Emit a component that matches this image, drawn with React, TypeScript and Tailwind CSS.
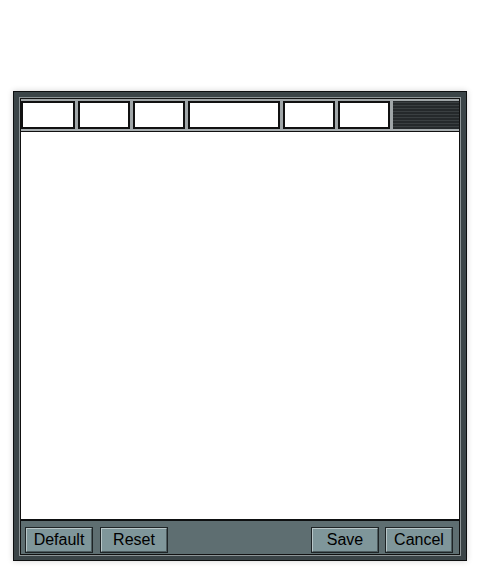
const tabs = [
  { w: 'w-[54px]' },
  { w: 'w-[52px]' },
  { w: 'w-[52px]' },
  { w: 'w-[92px]' },
  { w: 'w-[52px]' },
  { w: 'w-[52px]' },
];

function FrameButton({ label }: { label: string }) {
  return (
    <button className="h-[26px] w-[68px] border border-[#1e2426] bg-[#7f969a] p-0">
      <div className="flex h-full w-full items-center justify-center border border-t-[#b8c6c8] border-l-[#b8c6c8] border-r-[#4d5b5e] border-b-[#4d5b5e] text-[16px] leading-none text-black">
        {label}
      </div>
    </button>
  );
}

export default function App() {
  return (
    <div className="h-[574px] w-[480px] bg-white pt-[91px] pl-[13px]" style={{ fontFamily: '"Liberation Sans", Arial, sans-serif' }}>
      <div className="h-[470px] w-[454px] border border-[#0d0f10] bg-[#3b4548] px-[5px] pt-[5px] pb-[4px] shadow-[0_0_6px_rgba(0,0,0,0.18)]">
        <div className="h-full w-full border border-[#8d9597]">
          <div className="flex h-full w-full flex-col border border-[#111]">
            {/* tab strip */}
            <div className="flex h-[32px] gap-[3px] border-b-2 border-[#a7adaf] bg-[#a0a6a8] pt-[2px]">
              {tabs.map((t, i) => (
                <div key={i} className={`${t.w} h-[28px] border-2 border-[#111] bg-white`} />
              ))}
              <div
                className="h-[28px] flex-1 bg-[#2a2e30]"
                style={{ backgroundImage: 'repeating-linear-gradient(0deg, #25292b 0px, #25292b 2px, #3a3f41 2px, #3a3f41 3px)' }}
              />
            </div>
            {/* content */}
            <div className="flex-1 border-t border-[#111] bg-white" />
            {/* button bar */}
            <div className="flex h-[35px] items-center border-t-2 border-t-[#0e1011] bg-[#5e6e71] pl-[4px] pr-[6px] pt-[6px] pb-[1px]">
              <div className="flex gap-[7px]">
                <FrameButton label="Default" />
                <FrameButton label="Reset" />
              </div>
              <div className="flex-1" />
              <div className="flex gap-[6px]">
                <FrameButton label="Save" />
                <FrameButton label="Cancel" />
              </div>
            </div>
          </div>
        </div>
      </div>
    </div>
  );
}
